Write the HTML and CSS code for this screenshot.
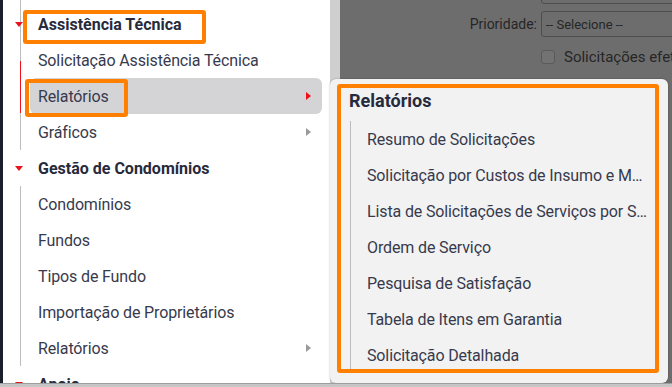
FILE: index.html
```html
<!DOCTYPE html>
<html lang="pt-BR">
<head>
<meta charset="utf-8">
<title>Menu</title>
<link rel="stylesheet" href="styles.css">
</head>
<body>
<div class="screen">
  <div class="main">
    <div class="rail"></div>
    <nav class="sidebar">
      <div class="group first">
        <div class="group-head"><span class="caret-down"></span><span>Assistência Técnica</span><span class="annot annot-head"></span></div>
        <ul class="sub">
          <li class="item"><span>Solicitação Assistência Técnica</span></li>
          <li class="item active"><span>Relatórios</span><span class="caret-right red"></span><span class="annot annot-item"></span></li>
          <li class="item"><span>Gráficos</span><span class="caret-right"></span></li>
        </ul>
      </div>
      <div class="group">
        <div class="group-head"><span class="caret-down"></span><span>Gestão de Condomínios</span></div>
        <ul class="sub">
          <li class="item"><span>Condomínios</span></li>
          <li class="item"><span>Fundos</span></li>
          <li class="item"><span>Tipos de Fundo</span></li>
          <li class="item"><span>Importação de Proprietários</span></li>
          <li class="item"><span>Relatórios</span><span class="caret-right"></span></li>
        </ul>
      </div>
      <div class="group">
        <div class="group-head"><span class="caret-down"></span><span>Apoio</span></div>
      </div>
    </nav>
    <div class="vscroll"></div>
    <div class="page">
      <div class="form">
        <span class="label"></span>
        <div class="select"></div>
        <span class="label">Prioridade:</span>
        <div class="select"><span>-- Selecione --</span></div>
        <span class="label"></span>
        <label class="check"><span class="box"></span><span>Solicitações efetuadas</span></label>
      </div>
    </div>
    <div class="submenu">
      <div class="sm-title">Relatórios</div>
      <ul class="sm-list">
        <li class="sm-item"><span>Resumo de Solicitações</span></li>
        <li class="sm-item"><span>Solicitação por Custos de Insumo e Mão de Obra</span></li>
        <li class="sm-item"><span>Lista de Solicitações de Serviços por Status</span></li>
        <li class="sm-item"><span>Ordem de Serviço</span></li>
        <li class="sm-item"><span>Pesquisa de Satisfação</span></li>
        <li class="sm-item"><span>Tabela de Itens em Garantia</span></li>
        <li class="sm-item"><span>Solicitação Detalhada</span></li>
      </ul>
      <span class="annot annot-sub"></span>
    </div>
  </div>
  <div class="hscroll"></div>
</div>
</body>
</html>
```
FILE: styles.css
```css
* { box-sizing: border-box; margin: 0; padding: 0; }
html, body { width: 672px; height: 387px; overflow: hidden; }
body {
  font-family: Roboto, "Noto Sans", sans-serif;
  color: #373a4d;
  background: #fff;
}
ul { list-style: none; }

.screen { display: flex; flex-direction: column; height: 387px; }
.main { position: relative; display: flex; height: 383px; overflow: hidden; }
.hscroll { height: 4px; background: #c6c6c6; border-top: 1px solid #9e9e9e; }

.rail { width: 3px; background: #1b1f2c; flex: none; }

.sidebar { width: 327px; flex: none; background: #fff; padding-top: 6px; }

.group-head {
  position: relative;
  height: 36px;
  display: flex;
  align-items: center;
  padding-left: 12px;
  font-size: 16px;
  font-weight: 700;
  color: #272a3b;
}
.group.first .group-head::before {
  content: "";
  position: absolute;
  left: 17px;
  top: -6px;
  bottom: 0;
  width: 1px;
  background: #bdbdbd;
}
.caret-down {
  position: relative;
  z-index: 1;
  width: 0; height: 0;
  border-left: 4px solid transparent;
  border-right: 4px solid transparent;
  border-top: 5px solid #e8141c;
  margin-right: 15px;
}

.sub { margin-left: 17px; border-left: 1px solid #bdbdbd; }
.item {
  position: relative;
  height: 36px;
  display: flex;
  align-items: center;
  justify-content: space-between;
  margin-left: 9px;
  margin-right: 8px;
  padding-left: 8px;
  padding-right: 11px;
  border-radius: 6px;
  font-size: 16px;
  letter-spacing: -0.13px;
}
.item.active { background: #d4d4d7; }
.item.active::before {
  content: "";
  position: absolute;
  left: -10px;
  top: -17px;
  bottom: 1px;
  width: 1px;
  background: #f0101a;
}
.caret-right {
  width: 0; height: 0;
  border-top: 4.5px solid transparent;
  border-bottom: 4.5px solid transparent;
  border-left: 5px solid #9a9a9a;
}
.caret-right.red { border-left-color: #f0101a; }

.annot { position: absolute; border: 4px solid #ff8000; border-radius: 3px; pointer-events: none; }
.annot-head { left: 20px; top: 4px; width: 183px; height: 34px; }
.annot-item { left: -5px; top: 1px; width: 103px; height: 38px; }
.annot-sub { left: 7px; top: 5px; width: 322px; height: 289px; }

.vscroll { width: 10px; flex: none; background: #cfcfcf; }

.page { flex: 1; background: #6d6d6d; overflow: hidden; }
.form {
  display: grid;
  grid-template-columns: 197px 200px;
  column-gap: 4px;
  row-gap: 7px;
  margin-top: -22px;
  align-items: center;
}
.label { text-align: right; font-size: 14px; color: #262626; }
.select {
  height: 26px;
  border: 1px solid #4d4d4d;
  border-radius: 3px;
  padding-left: 4px;
  display: flex;
  align-items: center;
  font-size: 13px;
  color: #262626;
}
.check {
  display: flex;
  align-items: center;
  gap: 9px;
  margin-top: 4px;
  font-size: 15px;
  color: #262626;
  white-space: nowrap;
}
.box {
  width: 14px; height: 14px;
  border: 1px solid #5a5a5a;
  border-radius: 3px;
  background: #727272;
}

.submenu {
  position: absolute;
  left: 330px;
  top: 79px;
  width: 338px;
  height: 304px;
  background: #f2f2f2;
  border-radius: 6px;
  box-shadow: 0 0 2px rgba(0,0,0,0.3);
  padding: 3px 0 0 19px;
}
.sm-title {
  height: 36px;
  display: flex;
  align-items: center;
  font-size: 18px;
  font-weight: 700;
  color: #272a3b;
}
.sm-list { margin-top: 3px; margin-left: 1px; border-left: 1px solid #bdbdbd; }
.sm-item {
  height: 36px;
  display: flex;
  align-items: center;
  padding-left: 16px;
  width: 297px;
  font-size: 16px;
  letter-spacing: -0.13px;
}
.sm-item span { white-space: nowrap; overflow: hidden; text-overflow: ellipsis; }
```
